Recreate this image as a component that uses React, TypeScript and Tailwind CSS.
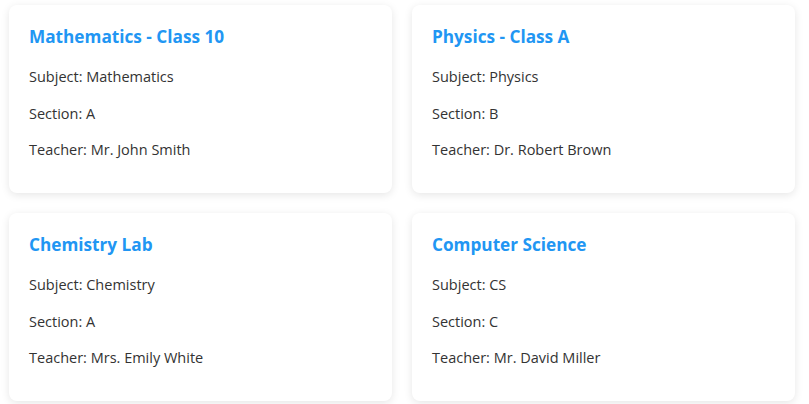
const classes = [
  { name: "Mathematics - Class 10", subject: "Mathematics", section: "A", teacher: "Mr. John Smith" },
  { name: "Physics - Class A", subject: "Physics", section: "B", teacher: "Dr. Robert Brown" },
  { name: "Chemistry Lab", subject: "Chemistry", section: "A", teacher: "Mrs. Emily White" },
  { name: "Computer Science", subject: "CS", section: "C", teacher: "Mr. David Miller" },
];

export default function App() {
  return (
    <div className="min-h-screen bg-white pl-[9px] pt-[5px] font-['Open_Sans',sans-serif]">
      <div className="grid grid-cols-[383px_383px] gap-x-5 gap-y-5">
        {classes.map((c) => (
          <div
            key={c.name}
            className="h-[188px] rounded-lg bg-white px-5 pt-5 shadow-[0_2px_8px_rgba(0,0,0,0.1)]"
          >
            <h3 className="text-[17.2px] font-bold leading-[24px] text-[#2196f3]">{c.name}</h3>
            <div className="mt-[17px] flex flex-col gap-[14.5px] text-[14.5px] leading-[22px] text-[#333]">
              <p>Subject: {c.subject}</p>
              <p>Section: {c.section}</p>
              <p>Teacher: {c.teacher}</p>
            </div>
          </div>
        ))}
      </div>
    </div>
  );
}
